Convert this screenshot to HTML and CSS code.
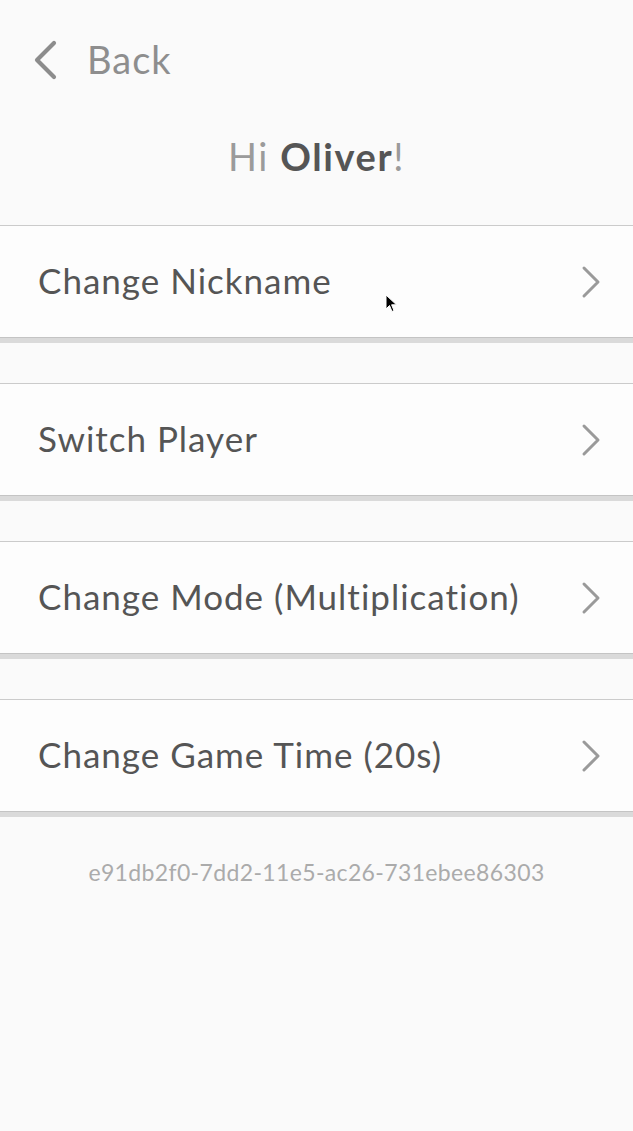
FILE: index.html
```html
<!DOCTYPE html>
<html>
<head>
<meta charset="utf-8">
<link rel="stylesheet" href="styles.css">
</head>
<body>
<div class="screen">
  <div class="topbar">
    <svg class="back-icon" width="26" height="42" viewBox="0 0 26 42"><polyline points="22,4 5,21 22,38" fill="none" stroke="#8c8c8c" stroke-width="4.2" stroke-linecap="round" stroke-linejoin="round"/></svg>
    <span class="back-label">Back</span>
  </div>
  <div class="greeting"><span class="hi">Hi </span><b class="name">Oliver</b><span class="hi">!</span></div>
  <div class="menu">
    <div class="item"><span class="label">Change Nickname</span><svg class="chev" width="20" height="34" viewBox="0 0 20 34"><polyline points="3,3 17,17 3,31" fill="none" stroke="#9a9a9a" stroke-width="3" stroke-linecap="round" stroke-linejoin="round"/></svg></div>
    <div class="item"><span class="label">Switch Player</span><svg class="chev" width="20" height="34" viewBox="0 0 20 34"><polyline points="3,3 17,17 3,31" fill="none" stroke="#9a9a9a" stroke-width="3" stroke-linecap="round" stroke-linejoin="round"/></svg></div>
    <div class="item"><span class="label">Change Mode (Multiplication)</span><svg class="chev" width="20" height="34" viewBox="0 0 20 34"><polyline points="3,3 17,17 3,31" fill="none" stroke="#9a9a9a" stroke-width="3" stroke-linecap="round" stroke-linejoin="round"/></svg></div>
    <div class="item"><span class="label">Change Game Time (20s)</span><svg class="chev" width="20" height="34" viewBox="0 0 20 34"><polyline points="3,3 17,17 3,31" fill="none" stroke="#9a9a9a" stroke-width="3" stroke-linecap="round" stroke-linejoin="round"/></svg></div>
  </div>
  <div class="uuid">e91db2f0-7dd2-11e5-ac26-731ebee86303</div>
  <svg class="cursor" width="14" height="20" viewBox="0 0 14 20"><path d="M1,1 L1,15 L4.5,11.5 L7,17.5 L9,16.6 L6.6,10.8 L11.5,10.8 Z" fill="#000" stroke="#fff" stroke-width="1"/></svg>
</div>
</body>
</html>
```
FILE: styles.css
```css
html, body {
  margin: 0;
  padding: 0;
  background: #fafafa;
}
.screen {
  position: relative;
  width: 633px;
  height: 1131px;
  font-family: "Lato", "Noto Sans", sans-serif;
  overflow: hidden;
}
.topbar {
  height: 120px;
  display: flex;
  align-items: center;
  padding-left: 32px;
  gap: 29px;
}
.back-icon {
  display: block;
}
.back-label {
  font-size: 38px;
  letter-spacing: 1px;
  color: #8e8e8e;
  line-height: 1;
  padding-bottom: 2px;
}
.greeting {
  height: 72px;
  line-height: 72px;
  text-align: center;
  font-size: 38px;
  letter-spacing: 1.6px;
  margin-bottom: 33px;
}
.hi { color: #9b9b9b; }
.name { color: #555555; font-weight: 700; }
.menu {
  display: flex;
  flex-direction: column;
  gap: 45px;
}
.item {
  height: 111px;
  background: #fdfdfd;
  border-top: 1px solid #cbcbcb;
  border-bottom: 1px solid #c4c4c4;
  box-shadow: 0 5px 0 #dadada;
  display: flex;
  align-items: center;
  justify-content: space-between;
  padding: 0 32px 0 38px;
}
.label {
  font-size: 35px;
  letter-spacing: 1px;
  color: #555555;
  padding-bottom: 4px;
}
.chev { display: block; }
.uuid {
  margin-top: 45px;
  height: 30px;
  line-height: 30px;
  text-align: center;
  font-size: 23px;
  letter-spacing: 0.36px;
  color: #ababab;
}
.cursor {
  position: absolute;
  left: 385px;
  top: 294px;
}
```
